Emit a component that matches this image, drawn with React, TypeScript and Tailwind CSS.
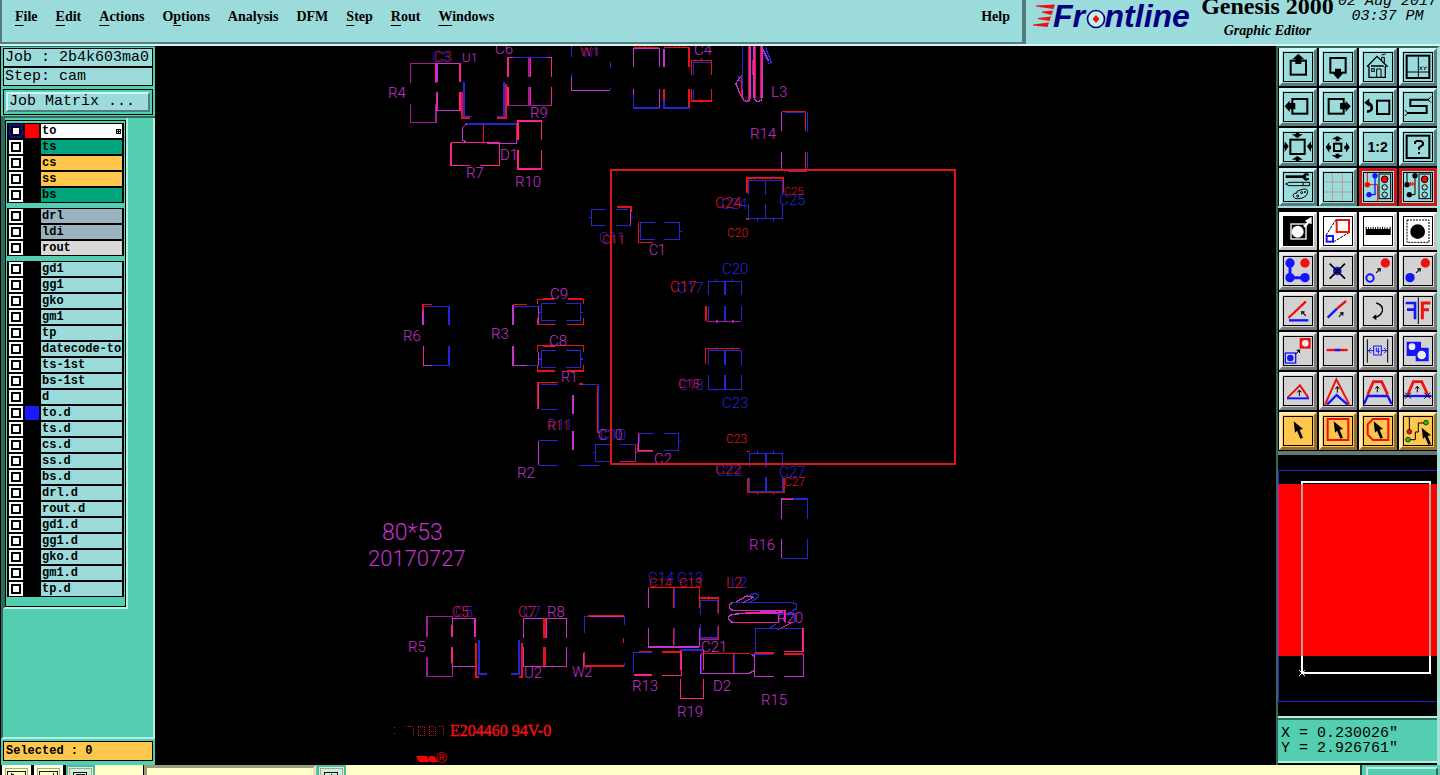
import React from "react";

const K = "#000";
const RED = "#f01010";
const BLUE = "#1414ff";

/* ---------- header ---------- */

const menus: [string, string, string][] = [
  ["", "F", "ile"],
  ["", "E", "dit"],
  ["", "A", "ctions"],
  ["O", "p", "tions"],
  ["Analysis", "", ""],
  ["DFM", "", ""],
  ["", "S", "tep"],
  ["", "R", "out"],
  ["", "W", "indows"],
];

function Logo() {
  return (
    <svg className="h-[44px] w-[164px] shrink-0" viewBox="0 0 164 44" aria-label="Frontline">
      <g fill={RED}>
        <path d="M3 5.500L22 4.500L20.500 9L3 6.500Z" />
        <path d="M9 11.500L20 10.500L18.500 15L9 12.500Z" />
        <path d="M5 18L18 16.500L16.500 21L5 19Z" />
        <path d="M0 24.500L16 22.500L14.500 27L0 25.500Z" />
      </g>
      <text x="20" y="27" fontFamily="Liberation Sans, sans-serif" fontWeight="700" fontStyle="italic" fontSize="32" fill="#000080">
        Fr<tspan fill="none">o</tspan>ntline
      </text>
      <circle cx="63" cy="19" r="8.500" fill="#c9eef2" stroke="#000080" strokeWidth="1.600" />
      <path d="M63 15L66.500 19L63 23L59.500 19Z" fill={RED} />
    </svg>
  );
}

function Header() {
  return (
    <header className="flex h-[46px] shrink-0 overflow-hidden border-b-2 border-[#d4f3f3] bg-[#9cdbdb] text-black">
      <nav className="flex flex-1 items-start gap-[18px] border-r-2 border-b-2 border-l-2 border-r-[#547d80] border-b-[#547d80] border-l-[#547d80] pt-2 pr-3 pl-[13px] font-['Liberation_Serif',serif] text-sm leading-[18px] font-bold">
        {menus.map(([a, u, b]) => (
          <button key={a + u + b} type="button">
            {a}
            {u && <span className="underline underline-offset-4">{u}</span>}
            {b}
          </button>
        ))}
        <button type="button" className="ml-auto">Help</button>
      </nav>
      <div className="flex w-[416px] justify-between border-l-2 border-[#547d80] pl-[7px]">
        <Logo />
        <div className="flex flex-col items-center justify-end gap-[2px] pb-1 font-['Liberation_Serif',serif] font-bold">
          <span className="text-2xl leading-7 whitespace-nowrap">Genesis 2000</span>
          <span className="text-sm leading-[18px] italic">Graphic Editor</span>
        </div>
        <div className="flex flex-col items-center justify-end pr-[3px] pb-5 font-['Liberation_Mono',monospace] text-[15px] leading-[15px] whitespace-nowrap italic">
          <span>02 Aug 2017</span>
          <span>03:37 PM</span>
        </div>
      </div>
    </header>
  );
}

/* ---------- layer list ---------- */

type Layer = { name: string; bg?: string; swatch?: string; active?: boolean };

const layerGroups: Layer[][] = [
  [
    { name: "to", bg: "bg-white", swatch: "bg-[#ff0000]", active: true },
    { name: "ts", bg: "bg-[#02a57d]" },
    { name: "cs", bg: "bg-[#ffc74e]" },
    { name: "ss", bg: "bg-[#ffc74e]" },
    { name: "bs", bg: "bg-[#02a57d]" },
  ],
  [
    { name: "drl", bg: "bg-[#9ab3c0]" },
    { name: "ldi", bg: "bg-[#9ab3c0]" },
    { name: "rout", bg: "bg-[#d9d9d9]" },
  ],
  [
    { name: "gd1" }, { name: "gg1" }, { name: "gko" }, { name: "gm1" }, { name: "tp" },
    { name: "datecode-to" }, { name: "ts-1st" }, { name: "bs-1st" }, { name: "d" },
    { name: "to.d", swatch: "bg-[#1a1aff]" }, { name: "ts.d" }, { name: "cs.d" }, { name: "ss.d" },
    { name: "bs.d" }, { name: "drl.d" }, { name: "rout.d" }, { name: "gd1.d" }, { name: "gg1.d" },
    { name: "gko.d" }, { name: "gm1.d" }, { name: "tp.d" },
  ],
];

function LayerRow({ name, bg = "bg-[#9cdbdb]", swatch = "bg-black", active }: Layer) {
  return (
    <label className="flex h-[14px] gap-[2px]">
      <input
        type="checkbox"
        defaultChecked={active}
        className={
          "size-[14px] shrink-0 appearance-none border-2 bg-white shadow-[inset_0_0_0_2px_#000] " +
          (active ? "border-[#0c0c90]" : "border-white")
        }
      />
      <span className={"w-[14px] shrink-0 " + swatch} />
      <span className={"flex flex-1 items-center justify-between px-px text-xs leading-[14px] font-bold whitespace-nowrap " + bg}>
        {name}
        {active && (
          <svg className="size-[5px]" viewBox="0 0 5 5" shapeRendering="crispEdges">
            <path d="M0 .5H5M0 2.500H5M0 4.500H5M.5 0V5M2.500 0V5M4.500 0V5" stroke={K} />
          </svg>
        )}
      </span>
    </label>
  );
}

function Sidebar() {
  return (
    <aside className="ml-px flex w-[154px] shrink-0 flex-col border-t border-[#2f6b5c] bg-[#54ceb0] font-['Liberation_Mono',monospace] text-black">
      <div className="flex flex-col gap-[3px] border-b-2 border-b-[#2f6b5c] px-[2px] py-px text-[15px] leading-[17px]">
        <div className="flex flex-col border border-black">
          <span className="h-[19px] border-b-2 border-black bg-[#9cdbdb] px-px whitespace-nowrap">Job : 2b4k603ma0</span>
          <span className="h-[17px] bg-[#9cdbdb] px-px">Step: cam</span>
        </div>
        <div className="border border-black p-[2px]">
          <button type="button" className="block h-5 w-full border-2 border-t-[#cdf5f5] border-r-[#547d80] border-b-[#547d80] border-l-[#cdf5f5] bg-[#9cdbdb] px-px text-left leading-4">
            Job Matrix ...
          </button>
        </div>
      </div>
      <div className="flex flex-1 flex-col items-start border-r-2 border-b-2 border-l-2 border-r-[#b4efdf] border-b-[#b4efdf] border-l-[#2f6b5c]">
        <div className="border-r-2 border-b-2 border-l-2 border-[#b4efdf] border-l-[#2f6b5c] pt-[2px]">
          <div className="flex w-[121px] flex-col gap-[5px] border border-black px-px pt-[2px] pb-[9px]">
            {layerGroups.map((g, i) => (
              <div key={i} className="flex flex-col gap-[2px] bg-black px-[2px] py-px">
                {g.map((l) => (
                  <LayerRow key={l.name} {...l} />
                ))}
              </div>
            ))}
          </div>
        </div>
      </div>
      <div className="px-[2px] pt-[2px] pb-1">
        <div className="h-5 border border-black bg-[#ffc74e] px-[2px] text-xs leading-[18px] font-bold">Selected : 0</div>
      </div>
    </aside>
  );
}

/* ---------- board drawing ---------- */

const C = { r: "#e8101c", b: "#2424d8", m: "#c830d0", p: "#a01c98", h: "#ff1e8c", d: "#b81820" } as const;
type CK = keyof typeof C;

/* Outlines in a grid three times finer than the screen, per region of the board. */
const regions: { tx: number; ty: number; paths: [CK, string, number?][] }[] = [
  {
    tx: 380, ty: 40,
    paths: [
      ["p", "M92 128V70H168V128M92 192V248H168V192"],
      ["m", "M171 125V70H241V125M171 157V212H241"],
      ["h", "M170 157V212M240 157V212M240 70V125M167 70V125"],
      ["r", "M245 155V234H270M378 132V234H350", 6],
      ["b", "M252 127V229H275M372 127V229H350", 5],
      ["h", "M384 112V53H515V112M384 141V197M515 141V197M452 53V112M452 141V197"],
      ["p", "M447 53V112M447 141V197H384M447 197H515"],
      ["b", "M400 53H500"],
      ["m", "M248 300V262L258 252H310V307H258L248 300M320 310H409V250"],
      ["b", "M262 252H408"],
      ["r", "M311 252V308M409 250V300"],
      ["h", "M213 308H358V376H300M213 308V376H270"],
      ["h", "M414 300V243H484V300M414 330V387H484V330"],
      ["b", "M574 18V50M574 103V110M691 67V84M691 144V150"],
      ["m", "M574 110V151H691"],
      ["m", "M761 82V26H838V82M852 82V26"],
      ["r", "M761 22H838M852 22H927V82M927 147V203M852 147V180", 5],
      ["m", "M761 147V165M838 147V203"],
      ["b", "M761 165V204H838M852 180V204H929"],
      ["r", "M935 105V62H994V105M935 148V183H994V148M965 54V62M965 183V190"],
      ["b", "M940 105V67H994M940 148V181"],
      ["m", "M1088 100V172Q1090 184 1100 184Q1110 184 1110 172V18M1122 18V172Q1124 184 1134 184Q1146 184 1146 172V18"],
      ["r", "M1106 18V182M1126 18V175M1142 18V175"],
      ["b", "M1088 18V150M1150 38L1167 72L1174 66L1156 20M1073 108L1085 130"],
      ["m", "M1085 105L1067 132L1086 172M1148 25L1166 62"],
      ["r", "M1085 110V170M1118 60V105"],
      ["m", "M1205 274V215M1205 336V392H1230"],
      ["r", "M1205 215H1277V274M1277 336V392"],
      ["b", "M1215 217H1272M1282 217V276M1282 336V390"],
      ["p", "M1225 394H1282"],
      ["r", "M1101 458V414H1210V458M1098 537H1108", 6],
      ["b", "M1106 464V422H1208V464M1106 492V535H1208V492M1156 422V464M1156 492V535M1132 408V418M1180 408V418M1132 535V545M1180 535V545"],
      ["b", "M678 508H634V556H678M708 508H745M708 556H752M627 532H634M752 532H759"],
      ["r", "M711 501H752V515", 6],
      ["m", "M752 510V556"],
      ["r", "M775 546V607H818"],
      ["b", "M824 547H781V598H824M852 547H899V598H852M899 574H906M775 574H781"],
    ],
  },
  {
    tx: 380, ty: 270,
    paths: [
      ["r", "M155 103H129V165M440 103H399"],
      ["m", "M129 120V165M207 125V165M207 228V265"],
      ["b", "M131 109H207V165M207 228V286H155"],
      ["h", "M130 228V286"],
      ["m", "M130 286H155M399 105V165M399 228V286H440"],
      ["b", "M400 109H474M440 286H476"],
      ["r", "M473 103V88H522M563 88H610V103M474 145V163H524M561 163H610V145", 4],
      ["r", "M490 88H522M563 88H610M490 228H524M561 302H610", 6],
      ["m", "M476 109V163M476 145V160M476 245V286"],
      ["b", "M528 100H484V151H528M558 100H602V151H558M476 127H484M602 127H609"],
      ["r", "M473 245V227H610V245M473 286V303H524M561 303H610V286"],
      ["b", "M528 241H484V292H528M558 241H602V292H558M476 267H484M602 267H609"],
      ["r", "M474 418V338H534M654 348V490M598 342H608"],
      ["m", "M476 340V418M579 375V433M579 483V541M476 512V586"],
      ["b", "M484 343H534M484 418H534M608 343H656V487M476 512H534M476 586H534M597 586H656"],
      ["b", "M691 523H646V574H691M720 523H766V574H720M639 548H646"],
      ["p", "M766 523V574H720M768 548H772"],
      ["r", "M772 520V544H818M776 490V515"],
      ["b", "M822 490H778V520M852 490H896V541H852M896 514H903"],
      ["m", "M776 500V541H820"],
      ["b", "M986 76V34H1084V76M986 108V152M1084 108V152M1010 27V34M1058 27V34"],
      ["b", "M1035 34V76M1035 108V152M1035 241V284M1035 316V358", 6],
      ["r", "M978 108V152", 7],
      ["p", "M980 154H1084M1010 150V158M1058 150V158", 5],
      ["r", "M977 282V236H1080"],
      ["b", "M986 284V241H1084V284M986 316V358H1084V316M1010 232V241M1058 232V241M1010 358V364M1058 358V364"],
      ["r", "M1101 544H1110"],
      ["b", "M1108 592V550H1208V592M1108 622V665H1208V622M1158 550V592M1158 622V665M1132 541V550M1180 541V550"],
      ["d", "M1104 625V668H1212V625M1132 668V676M1180 668V676"],
    ],
  },
  {
    tx: 360, ty: 490,
    paths: [
      ["m", "M1265 86V27H1300M1265 148V205"],
      ["b", "M1300 27H1342V86M1265 205H1342V148"],
      ["r", "M1270 25H1295"],
      ["p", "M201 440V380H277V440M201 502V559H277V502"],
      ["m", "M278 440V385H345V440M278 470V529H345"],
      ["h", "M276 405V440M276 470V520M346 385V440M346 458V525"],
      ["r", "M349 460V562H357M487 460V562H478", 6],
      ["b", "M357 450V551H380M477 450V551H453", 6],
      ["m", "M490 443V385H551V443M490 472V529H620V472M560 443V385H620V443"],
      ["r", "M552 385V443M557 385V443M552 472V529M557 472V529"],
      ["b", "M674 430V379H684M674 486V500M793 379V405M793 520V528"],
      ["r", "M684 378H793M671 490V527H793M790 445V458", 5],
      ["m", "M670 488V525M690 379H790"],
      ["m", "M866 353V294M866 414V471H1018M1018 414V471"],
      ["r", "M866 292H1018V353M940 414V471M940 294V353", 4],
      ["b", "M944 294V353M944 414V465"],
      ["r", "M1018 323H1075V372M1020 447H1075V404M1045 318V330M1045 447V452", 5],
      ["b", "M1022 375V331H1072V368M1022 403V444H1072V410"],
      ["b", "M821 550V487H876M909 487H964"],
      ["r", "M837 485H876M907 486H964V490"],
      ["h", "M821 555H876M907 556H964V490"],
      ["b", "M962 480H1030M1024 492V550M1124 491V550"],
      ["r", "M1024 491H1170M1121 492V550"],
      ["m", "M1022 493V550H1165L1184 541V500L1175 492"],
      ["h", "M962 540V480M961 567V625H1030V567M1030 480V540"],
      ["b", "M1118 337H1295Q1310 340 1310 350Q1308 360 1296 361"],
      ["m", "M1118 337Q1108 340 1108 350Q1110 361 1122 361H1270M1122 373Q1106 374 1106 385Q1108 397 1122 397H1255M1120 373L1255 362M1140 370H1255V397"],
      ["h", "M1125 397H1240M1140 370L1270 366"],
      ["m", "M1128 336L1160 318L1180 322L1150 337"],
      ["b", "M1168 316L1188 310L1196 320L1170 337M1255 372H1305V397M1230 414L1248 403"],
      ["h", "M1255 418L1297 397M1265 362H1275V397"],
      ["b", "M1186 484V415H1330M1186 492H1240"],
      ["h", "M1329 415V484H1272M1186 487H1242"],
      ["r", "M1190 488H1242M1272 492H1330", 6],
      ["m", "M1184 490V559H1242M1272 559H1330V492"],
    ],
  },
];

const labels: [number, number, string, CK, number?][] = [
  [432, 62, "C3", "b"], [434, 62, "C3", "d"], [462, 62, "U1", "m", 13], [495, 54, "C6", "m"],
  [582, 57, "W1", "b", 13], [580, 56, "W1", "r", 13], [633, 48, "C12", "r", 12], [663, 48, "C15", "r", 12], [694, 55, "C4", "m"],
  [771, 97, "L3", "m"], [388, 98, "R4", "m"], [530, 118, "R9", "m"], [466, 178, "R7", "m"],
  [500, 160, "D1", "m"], [515, 187, "R10", "m"], [750, 139, "R14", "m"],
  [721, 209, "C24", "b"], [715, 208, "C24", "r"], [779, 205, "C25", "b"], [784, 195, "C25", "r", 11],
  [727, 237, "C20", "r", 12], [722, 274, "C20", "b"], [599, 243, "C11", "b"], [602, 244, "C11", "r", 13],
  [649, 255, "C1", "m", 14], [677, 293, "C17", "b"], [670, 292, "C17", "r"], [679, 390, "C18", "b", 14],
  [678, 388, "C18", "r", 12], [722, 408, "C23", "b"], [726, 443, "C23", "r", 12],
  [716, 476, "C22", "b"], [715, 474, "C22", "d"], [779, 477, "C27", "b"], [784, 486, "C27", "r", 12],
  [403, 341, "R6", "m"], [491, 339, "R3", "m"], [550, 299, "C9", "m"], [549, 346, "C8", "m"],
  [561, 382, "R1", "m", 14], [548, 430, "R11", "b", 14], [547, 430, "R11", "r", 13], [600, 440, "C10", "b", 15],
  [598, 440, "C10", "m", 14], [654, 464, "C2", "m"], [517, 478, "R2", "m"],
  [382, 540, "80*53", "m", 23], [368, 566, "20170727", "m", 22],
  [749, 550, "R16", "m"], [648, 583, "C14", "b"], [649, 587, "C14", "r", 13], [677, 583, "C13", "b"], [679, 587, "C13", "r", 13],
  [731, 588, "L2", "b"], [726, 588, "L2", "r"], [777, 623, "R20", "m"], [701, 652, "C21", "m"],
  [455, 617, "C5", "b"], [452, 617, "C5", "r", 14], [523, 617, "C7", "b"], [518, 617, "C7", "r"],
  [547, 617, "R8", "m"], [408, 652, "R5", "m"], [524, 678, "U2", "m"], [572, 677, "W2", "m", 14],
  [632, 691, "R13", "m"], [713, 691, "D2", "m"], [761, 705, "R15", "m"], [677, 717, "R19", "m"],
];

function Board() {
  return (
    <main className="min-w-0 flex-1 overflow-hidden bg-black">
      <svg className="block h-full w-full" viewBox="155 46 1121 719" preserveAspectRatio="xMidYMid meet">
        {regions.map((g, i) => (
          <g key={i} transform={`translate(${g.tx} ${g.ty}) scale(${1 / 3})`} fill="none" shapeRendering="crispEdges">
            {g.paths.map(([c, d, w], j) => (
              <path key={j} d={d} stroke={C[c]} strokeWidth={w ?? 4} />
            ))}
          </g>
        ))}
        <g fontFamily="Roboto, Liberation Sans, sans-serif" fontWeight="300">
          {labels.map(([x, y, t, c, s], i) => (
            <text key={i} x={x} y={y} fontSize={s ?? 15} fill={C[c]}>{t}</text>
          ))}
        </g>
        <rect x="611" y="170" width="344" height="294" fill="none" stroke="#e01414" strokeWidth="2" shapeRendering="crispEdges" />
        <g stroke="#d01414" strokeWidth="1" strokeDasharray="1 1" fill="none" shapeRendering="crispEdges">
          <path d="M394.500 727V729M394.500 733V735M418 726.500H424V735.500H418.500V726M429 726.500H435V735.500H429.500V726M429 731H435" />
          <path d="M406 726.500H413V736M439 726.500H444M443.500 726V736" />
        </g>
        <text x="450" y="736" fontFamily="Liberation Serif, serif" fontSize="16" fill="#f01414" stroke="#f01414" strokeWidth=".4">E204460 94V-0</text>
        <path d="M416 756H427L428 759L430 756H434L438 762H431L429 761V762H419Z" fill="#ff0000" />
        <text x="436" y="763" fontFamily="Liberation Sans, sans-serif" fontSize="15" fill="#ff0000">®</text>
      </svg>
    </main>
  );
}

/* ---------- tool palette ---------- */

const Cursor = ({ x = 0, y = 0 }: { x?: number; y?: number }) => (
  <path transform={`translate(${x} ${y})`} d="M32 16L36 50L42 44L52 68L60 65L50 41L60 39Z" fill={K} />
);
const Tip = ({ x, y, r = 0 }: { x: number; y: number; r?: number }) => (
  <path transform={`translate(${x} ${y}) rotate(${r})`} d="M0 18V0M-6 7L0 0L6 7" fill="none" stroke={K} strokeWidth="3" />
);
const Lights = () => (
  <g>
    <rect x="48" y="6" width="35" height="74" fill="none" stroke={K} strokeWidth="3" />
    <circle cx="65" cy="22" r="10" fill="#ff0000" stroke={K} strokeWidth="3" />
    <circle cx="65" cy="46" r="8" fill="none" stroke={K} strokeWidth="3" />
    <circle cx="65" cy="68" r="8" fill="none" stroke={K} strokeWidth="3" />
  </g>
);

type Tool = { n: string; tone: string; art: React.ReactNode };
const TEAL = "border-t-[#cdf5f5] border-l-[#cdf5f5] border-r-[#547d80] border-b-[#547d80] bg-[#9cdbdb]";
const STOP = "border-[#cf1818] bg-[#9cdbdb]";
const WHITE = "border-t-white border-l-white border-r-[#c4c4c4] border-b-[#c4c4c4] bg-white";
const GRAY = "border-t-[#ececec] border-l-[#ececec] border-r-[#7c7c7c] border-b-[#7c7c7c] bg-[#d2d2d2]";
const AMBER = "border-t-[#ffe9b4] border-l-[#ffe9b4] border-r-[#94702a] border-b-[#94702a] bg-[#ffc74e]";

const viewTools: Tool[] = [
  { n: "Pan up", tone: TEAL, art: <><rect x="23" y="26" width="46" height="42" fill="none" stroke={K} strokeWidth="6" /><path d="M46 5L64 22H55V36H37V22H28Z" /></> },
  { n: "Pan down", tone: TEAL, art: <><rect x="22" y="18" width="46" height="44" fill="none" stroke={K} strokeWidth="6" /><path d="M45 82L61 64H54V50H36V64H29Z" /></> },
  { n: "Home", tone: TEAL, art: <g fill="none" stroke={K} strokeWidth="4"><path d="M12 44L42 13L74 44M18 42V76H67V42M24 42H62" /><rect x="26" y="50" width="8" height="8" strokeWidth="3" /><path d="M41 76V51H54V76M56 26V16H64V34M56 9L68 6" strokeWidth="3" /></g> },
  { n: "Coordinate view", tone: TEAL, art: <><rect x="11" y="11" width="68" height="67" fill="none" stroke={K} strokeWidth="6" /><path d="M46 11V78M11 60H79" fill="none" stroke={K} strokeWidth="3" /><path d="M50 44L58 54M58 44L50 54M62 44L66 49L72 44M66 49L64 54" fill="none" stroke={K} strokeWidth="2.500" /></> },
  { n: "Pan left", tone: TEAL, art: <><rect x="28" y="21" width="45" height="44" fill="none" stroke={K} strokeWidth="6" /><path d="M5 43L20 26V33H37V52H20V60Z" /></> },
  { n: "Pan right", tone: TEAL, art: <><rect x="17" y="21" width="45" height="44" fill="none" stroke={K} strokeWidth="6" /><path d="M83 43L68 26V33H51V52H68V60Z" /></> },
  { n: "Previous view", tone: TEAL, art: <><rect x="42" y="26" width="37" height="40" fill="none" stroke={K} strokeWidth="6" /><path d="M12 59Q29 57 26 44Q24 34 14 33" fill="none" stroke={K} strokeWidth="8" /><path d="M4 32L19 19V44Z" /></> },
  { n: "Serpentine view", tone: TEAL, art: <><path d="M78 23H22V42H71V63H12" fill="none" stroke={K} strokeWidth="6" /><path d="M76 23L84 14M76 23L84 32M14 63L6 54M14 63L6 72" stroke={K} strokeWidth="3" /></> },
  { n: "Zoom in", tone: TEAL, art: <><rect x="22" y="23" width="43" height="43" fill="none" stroke={K} strokeWidth="6" /><path d="M38 2H49V7H60L43 18L26 7H38ZM38 87H49V83H60L43 72L26 83H38ZM2 38V49H5V60L17 43L5 28V38ZM87 38V49H84V60L72 43L84 28V38Z" /></> },
  { n: "Zoom out", tone: TEAL, art: <><rect x="33" y="35" width="22" height="22" fill="none" stroke={K} strokeWidth="6" /><path d="M43 12L60 22H49V28H38V22H26ZM43 80L60 70H49V65H38V70H26ZM8 46L19 30V41H24V52H19V62ZM80 46L69 30V41H64V52H69V62Z" /></> },
  { n: "Scale", tone: TEAL, art: <text x="44" y="60" textAnchor="middle" fontFamily="Liberation Sans, sans-serif" fontWeight="700" fontSize="42">1:2</text> },
  { n: "Query", tone: TEAL, art: <><rect x="11" y="11" width="68" height="67" fill="none" stroke={K} strokeWidth="6" /><path d="M36 36V31L41 27H54L60 32V38L48 47V53M48 60V66" fill="none" stroke={K} strokeWidth="6" /></> },
  { n: "Settings", tone: TEAL, art: <g fill="none" stroke={K} strokeWidth="3"><path d="M8 14H60" strokeWidth="8" /><path d="M78 9A10 10 0 1 0 78 20H68V9Z" fill={K} /><path d="M8 36L18 31H80V41H18ZM60 31V41" /><path d="M52 54Q72 46 74 58Q74 74 54 79Q32 84 30 70Q32 62 42 63Q38 56 52 54Z" /><circle cx="56" cy="62" r="3" /><circle cx="66" cy="60" r="2" /><circle cx="44" cy="72" r="3" /></g> },
  { n: "Grid", tone: TEAL, art: <path d="M28 2V88M58 2V88M2 30H88M2 60H88" stroke="#b79a98" strokeWidth="3" /> },
  { n: "Net check", tone: STOP, art: <><path d="M13 2V38H44V88" fill="none" stroke="#ff0000" strokeWidth="3" /><circle cx="13" cy="38" r="8" fill="#ff0000" /><path d="M36 11V68H18" fill="none" stroke={BLUE} strokeWidth="4" /><circle cx="36" cy="11" r="8" fill={BLUE} /><circle cx="18" cy="68" r="8" fill={BLUE} /><Lights /></> },
  { n: "Spacing check", tone: STOP, art: <><path d="M12 2V38M36 11V68H19" fill="none" stroke={K} strokeWidth="3" /><circle cx="36" cy="11" r="8" /><circle cx="12" cy="38" r="8" /><circle cx="19" cy="68" r="8" /><path d="M20 36H36M22 30V42M28 30V42M34 30V42" stroke="#ff0000" strokeWidth="3" /><Lights /></> },
];

const peak = "M14 56L31 17H56L74 56";

const editTools: Tool[] = [
  { n: "Invert", tone: WHITE, art: <><rect width="90" height="90" /><rect x="24" y="24" width="45" height="45" fill="none" stroke="#fff" strokeWidth="4" /><circle cx="44" cy="47" r="18" fill="#fff" /><path d="M60 30L72 20L66 14L86 2V24L78 22L66 35Z" fill="#fff" /></> },
  { n: "Scale feature", tone: WHITE, art: <><path d="M9 58L39 11M31 78L79 49" stroke={K} strokeWidth="3" strokeDasharray="9 3" /><rect x="41" y="12" width="37" height="36" fill="none" stroke={RED} strokeWidth="6" /><rect x="11" y="60" width="19" height="17" fill="none" stroke={BLUE} strokeWidth="6" /></> },
  { n: "Measure", tone: WHITE, art: <path d="M8 32H11V39H15V34H18V39H22V34H25V39H29V32H32V39H36V34H39V39H43V32H46V39H50V34H53V39H57V32H60V39H64V34H67V39H71V34H74V39H80V32H83V57H8Z" /> },
  { n: "Select area", tone: WHITE, art: <><rect x="12" y="12" width="66" height="67" fill="none" stroke={K} strokeWidth="3" strokeDasharray="6 3" /><circle cx="44" cy="47" r="22" /></> },
  { n: "Copy pads", tone: GRAY, art: <><path d="M21 21V65H66" fill="none" stroke={BLUE} strokeWidth="9" /><g fill={BLUE}><circle cx="21" cy="21" r="14" /><circle cx="21" cy="65" r="14" /><circle cx="66" cy="65" r="14" /></g><circle cx="66" cy="21" r="14" fill={RED} /></> },
  { n: "Delete", tone: GRAY, art: <><circle cx="43" cy="45" r="13" fill={BLUE} /><path d="M20 23L66 68M66 23L20 68" stroke={K} strokeWidth="5" /></> },
  { n: "Copy", tone: GRAY, art: <><circle cx="21" cy="66" r="11" fill="none" stroke={BLUE} strokeWidth="6" /><circle cx="67" cy="21" r="14" fill={RED} /><Tip x={52} y={38} r={45} /></> },
  { n: "Move", tone: GRAY, art: <><circle cx="21" cy="65" r="14" fill={BLUE} /><circle cx="67" cy="21" r="14" fill={RED} /><Tip x={52} y={38} r={45} /></> },
  { n: "Rotate line", tone: GRAY, art: <><path d="M18 73H76" stroke={BLUE} strokeWidth="7" /><path d="M16 66L69 16" stroke={RED} strokeWidth="7" /><Tip x={56} y={47} r={-45} /></> },
  { n: "Extend line", tone: GRAY, art: <><path d="M14 65L42 38" stroke={BLUE} strokeWidth="7" /><path d="M42 38L69 15" stroke={RED} strokeWidth="7" /><Tip x={60} y={50} r={45} /></> },
  { n: "Rotate", tone: GRAY, art: <><path d="M40 21Q62 28 58 46Q52 62 36 64" fill="none" stroke={K} strokeWidth="4" /><path d="M28 64L40 55V73Z" /></> },
  { n: "Mirror", tone: GRAY, art: <><path d="M8 21H36V70M12 41H36" fill="none" stroke={BLUE} strokeWidth="8" /><path d="M46 4V84" stroke={K} strokeWidth="3" /><path d="M58 70V21H82M58 41H78" fill="none" stroke={RED} strokeWidth="9" /></> },
  { n: "Replace symbol", tone: GRAY, art: <><rect x="7" y="51" width="31" height="30" fill="none" stroke={BLUE} strokeWidth="4" /><circle cx="22" cy="66" r="10" fill={BLUE} /><rect x="50" y="6" width="33" height="32" fill={RED} /><circle cx="67" cy="22" r="10" fill="#ececec" /><Tip x={50} y={42} r={45} /></> },
  { n: "Break line", tone: GRAY, art: <><path d="M11 42H74" stroke={RED} strokeWidth="7" /><path d="M35 42H52" stroke={BLUE} strokeWidth="7" /></> },
  { n: "Stretch", tone: GRAY, art: <><path d="M13 10V80M74 10V80" stroke={K} strokeWidth="3" /><path d="M16 44H71M24 36L16 44L24 52M63 36L71 44L63 52" fill="none" stroke={BLUE} strokeWidth="3" /><rect x="32" y="30" width="23" height="27" fill="#d2d2d2" stroke={BLUE} strokeWidth="3" /><path d="M40 35V46H50M46 35V53" fill="none" stroke={BLUE} strokeWidth="3" /></> },
  { n: "Merge", tone: GRAY, art: <><path d="M11 17H54V35H77V76H38V60H22L11 60Z" fill={BLUE} /><circle cx="27" cy="32" r="10" fill="#ececec" /><circle cx="56" cy="57" r="13" fill="#ececec" /></> },
  { n: "Triangle", tone: GRAY, art: <><path d="M14 65L51 28L76 65" fill="none" stroke={RED} strokeWidth="6" /><path d="M12 67H78" stroke={BLUE} strokeWidth="6" /><Tip x={49} y={42} /></> },
  { n: "Move corner", tone: GRAY, art: <><path d="M12 86L41 57L74 86" fill="none" stroke={BLUE} strokeWidth="7" /><path d="M6 86L40 10L79 86" fill="none" stroke={RED} strokeWidth="6" /><Tip x={43} y={32} /></> },
  { n: "Move segment", tone: GRAY, art: <><path d={peak} fill="none" stroke={RED} strokeWidth="8" /><path d="M3 84L14 60H74L86 84" fill="none" stroke={BLUE} strokeWidth="7" /><Tip x={43} y={31} /></> },
  { n: "Shift segment", tone: GRAY, art: <><path d={peak} fill="none" stroke={RED} strokeWidth="8" /><path d="M3 60H86" stroke={BLUE} strokeWidth="7" /><path d="M6 50L24 68M24 50L6 68M64 50L82 68M82 50L64 68" stroke={K} strokeWidth="3" /><Tip x={43} y={31} /></> },
  { n: "Select", tone: AMBER, art: <Cursor /> },
  { n: "Select in frame", tone: AMBER, art: <><rect x="14" y="9" width="62" height="63" fill="none" stroke={RED} strokeWidth="6" /><Cursor /></> },
  { n: "Select in polygon", tone: AMBER, art: <><path d="M30 9H76V72H30L14 56V25Z" fill="none" stroke={RED} strokeWidth="6" /><Cursor /></> },
  { n: "Select net", tone: AMBER, art: <><path d="M19 2V47M15 71H37V48H46V21H69" fill="none" stroke={K} strokeWidth="3" /><circle cx="19" cy="47" r="7" fill={RED} stroke={K} strokeWidth="2" /><circle cx="15" cy="71" r="7" fill="#18c818" stroke={K} strokeWidth="2" /><circle cx="69" cy="20" r="7" fill="#18c818" stroke={K} strokeWidth="2" /><Cursor x={24} y={19} /></> },
];

function Palette({ tools }: { tools: Tool[] }) {
  return (
    <div className="grid grid-cols-4 gap-[2px] bg-black pl-px">
      {tools.map((t) => (
        <button key={t.n} type="button" aria-label={t.n} className={"size-[38px] border-[3px] p-px " + t.tone}>
          <svg className="block size-[30px]" viewBox="0 0 90 90">
            {t.art}
            <rect x="1.500" y="1.500" width="87" height="87" fill="none" stroke={K} strokeWidth="3" />
          </svg>
        </button>
      ))}
    </div>
  );
}

function Overview() {
  return (
    <svg className="block min-h-0 w-full flex-1 bg-black" viewBox="0 0 159 262" preserveAspectRatio="none" shapeRendering="crispEdges">
      <rect x="0" y="29" width="159" height="173" fill="#ff0000" />
      <path d="M159 15.500H.5V247.500H159" fill="none" stroke="#2020d0" />
      <path d="M.5 29V202" stroke="#d010c0" />
      <path d="M24 27H152V219H24Z" fill="none" stroke="#fff" strokeWidth="2" />
      <path d="M24 29V202M152 29V202" stroke="#b4a4a4" strokeWidth="2" />
      <path d="M21 216L27 222M27 216L21 222" stroke="#fff" />
    </svg>
  );
}

function ToolPanel() {
  return (
    <aside className="flex w-[164px] shrink-0 flex-col border-t-2 border-r-[3px] border-l-2 border-t-[#2f6b5c] border-r-[#a9dfd6] border-l-[#2f6b5c] bg-black">
      <Palette tools={viewTools} />
      <div className="mb-1 h-[2px] bg-[#a9dfd6]" />
      <Palette tools={editTools} />
      <div className="mt-px h-1 bg-[#5d7a78]" />
      <Overview />
      <div className="mb-[2px] border-y-2 border-t-[#b4efdf] border-b-[#b4efdf] bg-[#54ceb0]">
        <div className="border-t-2 border-[#2f6b5c] px-[3px] pt-[6px] pb-[5px] font-['Liberation_Mono',monospace] text-[15px] leading-[15px] whitespace-pre text-black">
          <div>X = 0.230026"</div>
          <div>Y = 2.926761"</div>
        </div>
      </div>
    </aside>
  );
}

/* ---------- bottom strip, continues below the window ---------- */

function FootButton({ green, label, children }: { green?: boolean; label: string; children: React.ReactNode }) {
  return (
    <button
      type="button"
      aria-label={label}
      className={"flex h-7 w-[29px] shrink-0 items-start border-2 p-px " + (green ? "border-[#54b8a0] bg-[#cdeedd]" : "border-[#fffff0] bg-[#ffffcc]")}
    >
      <span className="block flex-1 border border-[#a8a880] p-px">
        <svg className="block h-4 w-full" viewBox="0 0 21 16" fill="none" stroke={K} shapeRendering="crispEdges">{children}</svg>
      </span>
    </button>
  );
}

function Footer() {
  return (
    <footer className="flex h-[10px] shrink-0 items-start overflow-hidden bg-[#ffffcc]">
      <div className="flex gap-[3px] bg-black pl-[2px]">
        <FootButton label="Snap"><path d="M.5 16V.5H20.500V16M4.500 3V16M4 4.500H8" /></FootButton>
        <FootButton label="Line"><path d="M.5 16V.5H20.500V16M16.500 3V16" /></FootButton>
        <FootButton label="Box" green><path d="M2.500 16V1.500H17.500V16M6 4H15V16" /></FootButton>
      </div>
      <div className="ml-12 flex bg-black pl-px">
        <input aria-label="Command" className="h-7 w-[172px] border-[3px] border-t-[#9c9c78] border-r-[#e4e4b8] border-l-[#9c9c78] bg-[#ffffcc] outline-none" />
        <span className="w-px bg-[#54ceb0]" />
        <FootButton label="Up" green><path d="M2.500 16V1.500H17.500V16M10.500 4V16" /></FootButton>
      </div>
      <div className="ml-auto flex w-[80px] border-l-2 border-[#1c4a40] bg-[#54ceb0] p-[2px] pl-1">
        <button type="button" aria-label="Close" className="h-7 flex-1 border-2 border-t-[#b4efdf] border-r-[#2f6b5c] border-l-[#b4efdf] bg-[#54ceb0]" />
      </div>
    </footer>
  );
}

export default function App() {
  return (
    <div className="flex h-screen flex-col overflow-hidden bg-black">
      <Header />
      <div className="flex min-h-0 flex-1">
        <Sidebar />
        <Board />
        <ToolPanel />
      </div>
      <Footer />
    </div>
  );
}
